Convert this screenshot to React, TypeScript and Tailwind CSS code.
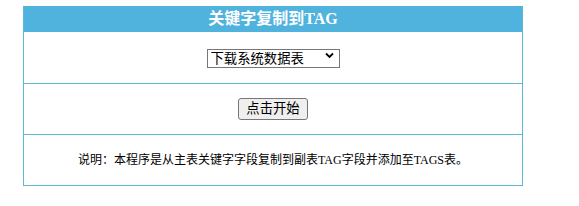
import { useState } from 'react'

const TABLES = ['下载系统数据表']

export default function App() {
  const [table, setTable] = useState(TABLES[0])

  return (
    <div className="w-[579px] h-[206px] bg-white pt-[6px] pl-[23px]" style={{ fontFamily: '"Liberation Sans", "Noto Sans CJK SC", sans-serif' }}>
      <div className="w-[500px] border-x border-b border-[#5cb9cf]">
        {/* Title */}
        <div
          className="h-[26px] bg-[#4fb3dd] flex items-center justify-center text-white font-bold text-[16px] leading-none"
          style={{ fontFamily: '"Liberation Serif", "Noto Sans CJK SC", serif' }}
        >
          关键字复制到TAG
        </div>

        {/* Table picker */}
        <div className="h-[52px] border-b border-[#5cb9cf] flex items-center justify-center">
          <div className="relative">
            <select
              value={table}
              onChange={(e) => setTable(e.target.value)}
              className="appearance-none w-[133px] h-[19px] border border-[#767676] bg-white pl-[3px] text-[13.33px] leading-none text-black outline-none"
            >
              {TABLES.map((t) => (
                <option key={t} value={t}>
                  {t}
                </option>
              ))}
            </select>
            <svg
              className="absolute right-[6px] top-[6px] pointer-events-none"
              width="9"
              height="7"
              viewBox="0 0 9 7"
              fill="none"
            >
              <path d="M1 1.5 L4.5 5 L8 1.5" stroke="#000" strokeWidth="1.8" />
            </svg>
          </div>
        </div>

        {/* Start */}
        <div className="h-[51px] border-b border-[#5cb9cf] flex items-center justify-center">
          <button className="w-[70px] h-[22px] border border-[#767676] rounded-[3px] bg-[#efefef] text-[13.33px] leading-none text-black hover:bg-[#e5e5e5]">
            点击开始
          </button>
        </div>

        {/* Note */}
        <div
          className="h-[50px] flex items-center justify-center text-[12px] text-black"
          style={{ fontFamily: '"Liberation Serif", "Noto Sans CJK SC", serif' }}
        >
          说明：本程序是从主表关键字字段复制到副表TAG字段并添加至TAGS表。
        </div>
      </div>
    </div>
  )
}
